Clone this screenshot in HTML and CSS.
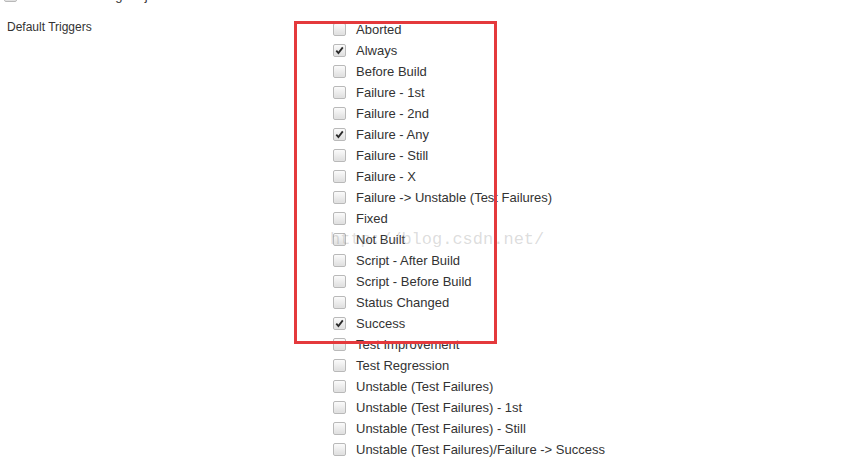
FILE: index.html
```html
<!DOCTYPE html>
<html lang="en">
<head>
    <meta charset="UTF-8">
    <title>Default Triggers</title>
    <link rel="stylesheet" href="styles.css">
</head>
<body>
    <div class="page">
        <div class="top-row">
            <span class="box"></span>
            <span>Enable watching for jobs</span>
        </div>

        <div class="section">
            <div class="label">Default Triggers</div>
            <ul class="triggers">
                <li><span class="box"></span>Aborted</li>
                <li><span class="box checked"><svg viewBox="0 0 12 12"><path d="M2.5 6.2 L4.8 8.8 L9.6 2.6" /></svg></span>Always</li>
                <li><span class="box"></span>Before Build</li>
                <li><span class="box"></span>Failure - 1st</li>
                <li><span class="box"></span>Failure - 2nd</li>
                <li><span class="box checked"><svg viewBox="0 0 12 12"><path d="M2.5 6.2 L4.8 8.8 L9.6 2.6" /></svg></span>Failure - Any</li>
                <li><span class="box"></span>Failure - Still</li>
                <li><span class="box"></span>Failure - X</li>
                <li><span class="box"></span>Failure -&gt; Unstable (Test Failures)</li>
                <li><span class="box"></span>Fixed</li>
                <li><span class="box"></span>Not Built</li>
                <li><span class="box"></span>Script - After Build</li>
                <li><span class="box"></span>Script - Before Build</li>
                <li><span class="box"></span>Status Changed</li>
                <li><span class="box checked"><svg viewBox="0 0 12 12"><path d="M2.5 6.2 L4.8 8.8 L9.6 2.6" /></svg></span>Success</li>
                <li><span class="box"></span>Test Improvement</li>
                <li><span class="box"></span>Test Regression</li>
                <li><span class="box"></span>Unstable (Test Failures)</li>
                <li><span class="box"></span>Unstable (Test Failures) - 1st</li>
                <li><span class="box"></span>Unstable (Test Failures) - Still</li>
                <li><span class="box"></span>Unstable (Test Failures)/Failure -&gt; Success</li>
            </ul>
        </div>

        <!-- annotation drawn over the list -->
        <div class="highlight"></div>
        <div class="watermark">http://blog.csdn.net/</div>
    </div>
</body>
</html>
```

FILE: styles.css
```css
body {
    margin: 0;
    background: #fff;
    font-family: 'Liberation Sans', Arial, sans-serif;
    font-size: 13px;
    color: #333;
}

.page {
    position: relative;
    display: flow-root;
}

.top-row {
    display: flex;
    align-items: center;
    height: 21px;
    margin-top: -15px;
    padding-left: 4px;
}

.top-row .box {
    margin-right: 10px;
}

.section {
    display: grid;
    grid-template-columns: 333px 1fr;
    margin-top: 13px;
}

.label {
    padding-left: 7px;
    font-size: 12px;
    line-height: 17px;
}

.triggers {
    list-style: none;
    margin: 0;
    padding: 0;
}

.triggers li {
    display: flex;
    align-items: flex-start;
    height: 21px;
    line-height: 21px;
    white-space: nowrap;
}

.box {
    flex: none;
    width: 11px;
    height: 11px;
    margin-top: 4px;
    margin-right: 10px;
    border: 1px solid #b9b9b9;
    border-radius: 2px;
    background: linear-gradient(#fbfbfb, #dedede);
    box-shadow: inset 0 0 1px rgba(255, 255, 255, 0.8);
}

.top-row .box {
    margin-top: 0;
}

.box svg {
    display: block;
    width: 11px;
    height: 11px;
}

.box path {
    fill: none;
    stroke: #2a2a2a;
    stroke-width: 2;
}

.highlight {
    position: absolute;
    left: 294px;
    top: 21px;
    width: 197px;
    height: 317px;
    border: 3px solid #e4393c;
}

.watermark {
    position: absolute;
    left: 330px;
    top: 230px;
    font-family: 'Liberation Mono', monospace;
    font-size: 17px;
    color: rgba(140, 140, 140, 0.3);
    pointer-events: none;
}
```
